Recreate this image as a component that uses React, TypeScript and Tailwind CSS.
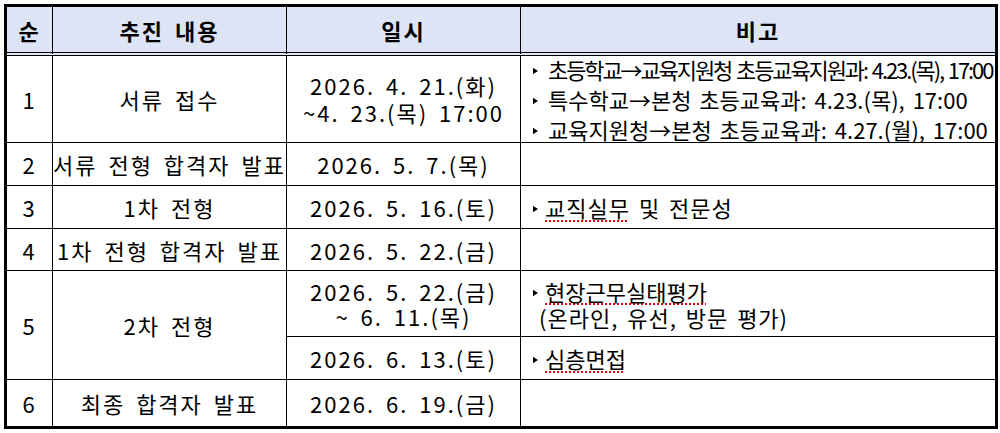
import type { ReactNode } from "react";

const FONT = "font-['Noto_Sans_CJK_KR','Noto_Sans',sans-serif]";

function Bullet({ gap = "mr-[10px]" }: { gap?: string }) {
  return (
    <svg viewBox="0 0 6 8" className={`inline-block w-[5px] h-[8px] ${gap} align-middle relative top-[-2px]`}>
      <polygon points="0,0 6,4 0,8" fill="#000" />
    </svg>
  );
}

function Cell({
  children,
  className = "",
  last = false,
  bottom = true,
}: {
  children?: ReactNode;
  className?: string;
  last?: boolean;
  bottom?: boolean;
}) {
  return (
    <div
      className={`border-black ${last ? "" : "border-r"} ${bottom ? "border-b" : ""} flex items-center ${className}`}
    >
      {children}
    </div>
  );
}

function Mid({ children, className = "", bottom = true }: { children?: ReactNode; className?: string; bottom?: boolean }) {
  return (
    <Cell bottom={bottom} className={`justify-center text-center whitespace-nowrap tracking-[2px] [word-spacing:4px] ${className}`}>
      {children}
    </Cell>
  );
}

function Note({ children, className = "", bottom = true }: { children?: ReactNode; className?: string; bottom?: boolean }) {
  return (
    <Cell last bottom={bottom} className={`pl-[12px] whitespace-nowrap ${className}`}>
      {children}
    </Cell>
  );
}

function Head({ children, last = false }: { children: ReactNode; last?: boolean }) {
  return (
    <div
      className={`bg-[#dce4f5] border-black border-b-4 border-double ${last ? "" : "border-r"} flex items-center justify-center font-bold text-[22px] tracking-[2px] [word-spacing:4px]`}
    >
      {children}
    </div>
  );
}

function Spell({ children }: { children: ReactNode }) {
  return (
    <span className="underline decoration-dotted decoration-red-600 decoration-[1.5px] underline-offset-[3px]">
      {children}
    </span>
  );
}

export default function App() {
  return (
    <div className={`bg-white w-[1000px] h-[433px] pt-[4px] pl-[4px] text-black ${FONT}`}>
      <div className="w-[994px] border-[3px] border-black grid grid-cols-[46px_234px_234px_474px] grid-rows-[49px_87px_43px_43px_42px_66px_43px_46px] text-[22px] leading-[26px]">
        <Head>순</Head>
        <Head>추진 내용</Head>
        <Head>일시</Head>
        <Head last>비고</Head>

        <Mid>1</Mid>
        <Mid>서류 접수</Mid>
        <Mid className="leading-[27px]">
          <div>
            2026. 4. 21.(화)
            <br />
            ~4. 23.(목) 17:00
          </div>
        </Mid>
        <Note className="leading-[30px]">
          <div>
            <div className="tracking-[-2.1px] [word-spacing:2px]">
              <Bullet />
              초등학교→교육지원청 초등교육지원과: 4.23.(목), 17:00
            </div>
            <div className="[word-spacing:3px]">
              <Bullet />
              특수학교→본청 초등교육과: 4.23.(목), 17:00
            </div>
            <div className="[word-spacing:3px]">
              <Bullet />
              교육지원청→본청 초등교육과: 4.27.(월), 17:00
            </div>
          </div>
        </Note>

        <Mid>2</Mid>
        <Mid>서류 전형 합격자 발표</Mid>
        <Mid>2026. 5. 7.(목)</Mid>
        <Note />

        <Mid>3</Mid>
        <Mid>1차 전형</Mid>
        <Mid>2026. 5. 16.(토)</Mid>
        <Note className="tracking-[1px] [word-spacing:3px]">
          <div>
            <Bullet gap="mr-[7px]" />
            <Spell>교직실무</Spell> 및 전문성
          </div>
        </Note>

        <Mid>4</Mid>
        <Mid>1차 전형 합격자 발표</Mid>
        <Mid>2026. 5. 22.(금)</Mid>
        <Note />

        <Mid className="row-span-2">5</Mid>
        <Mid className="row-span-2">2차 전형</Mid>
        <Mid className="leading-[25px]">
          <div>
            2026. 5. 22.(금)
            <br />~ 6. 11.(목)
          </div>
        </Mid>
        <Note className="[word-spacing:3px]">
          <div>
            <div>
              <Bullet gap="mr-[7px]" />
              <Spell>현장근무실태평가</Spell>
            </div>
            <div className="pl-[6px] tracking-[1px]">(온라인, 유선, 방문 평가)</div>
          </div>
        </Note>
        <Mid>2026. 6. 13.(토)</Mid>
        <Note>
          <div>
            <Bullet gap="mr-[7px]" />
            <Spell>심층면접</Spell>
          </div>
        </Note>

        <Mid bottom={false}>6</Mid>
        <Mid bottom={false}>최종 합격자 발표</Mid>
        <Mid bottom={false}>2026. 6. 19.(금)</Mid>
        <Note bottom={false} />
      </div>
    </div>
  );
}
